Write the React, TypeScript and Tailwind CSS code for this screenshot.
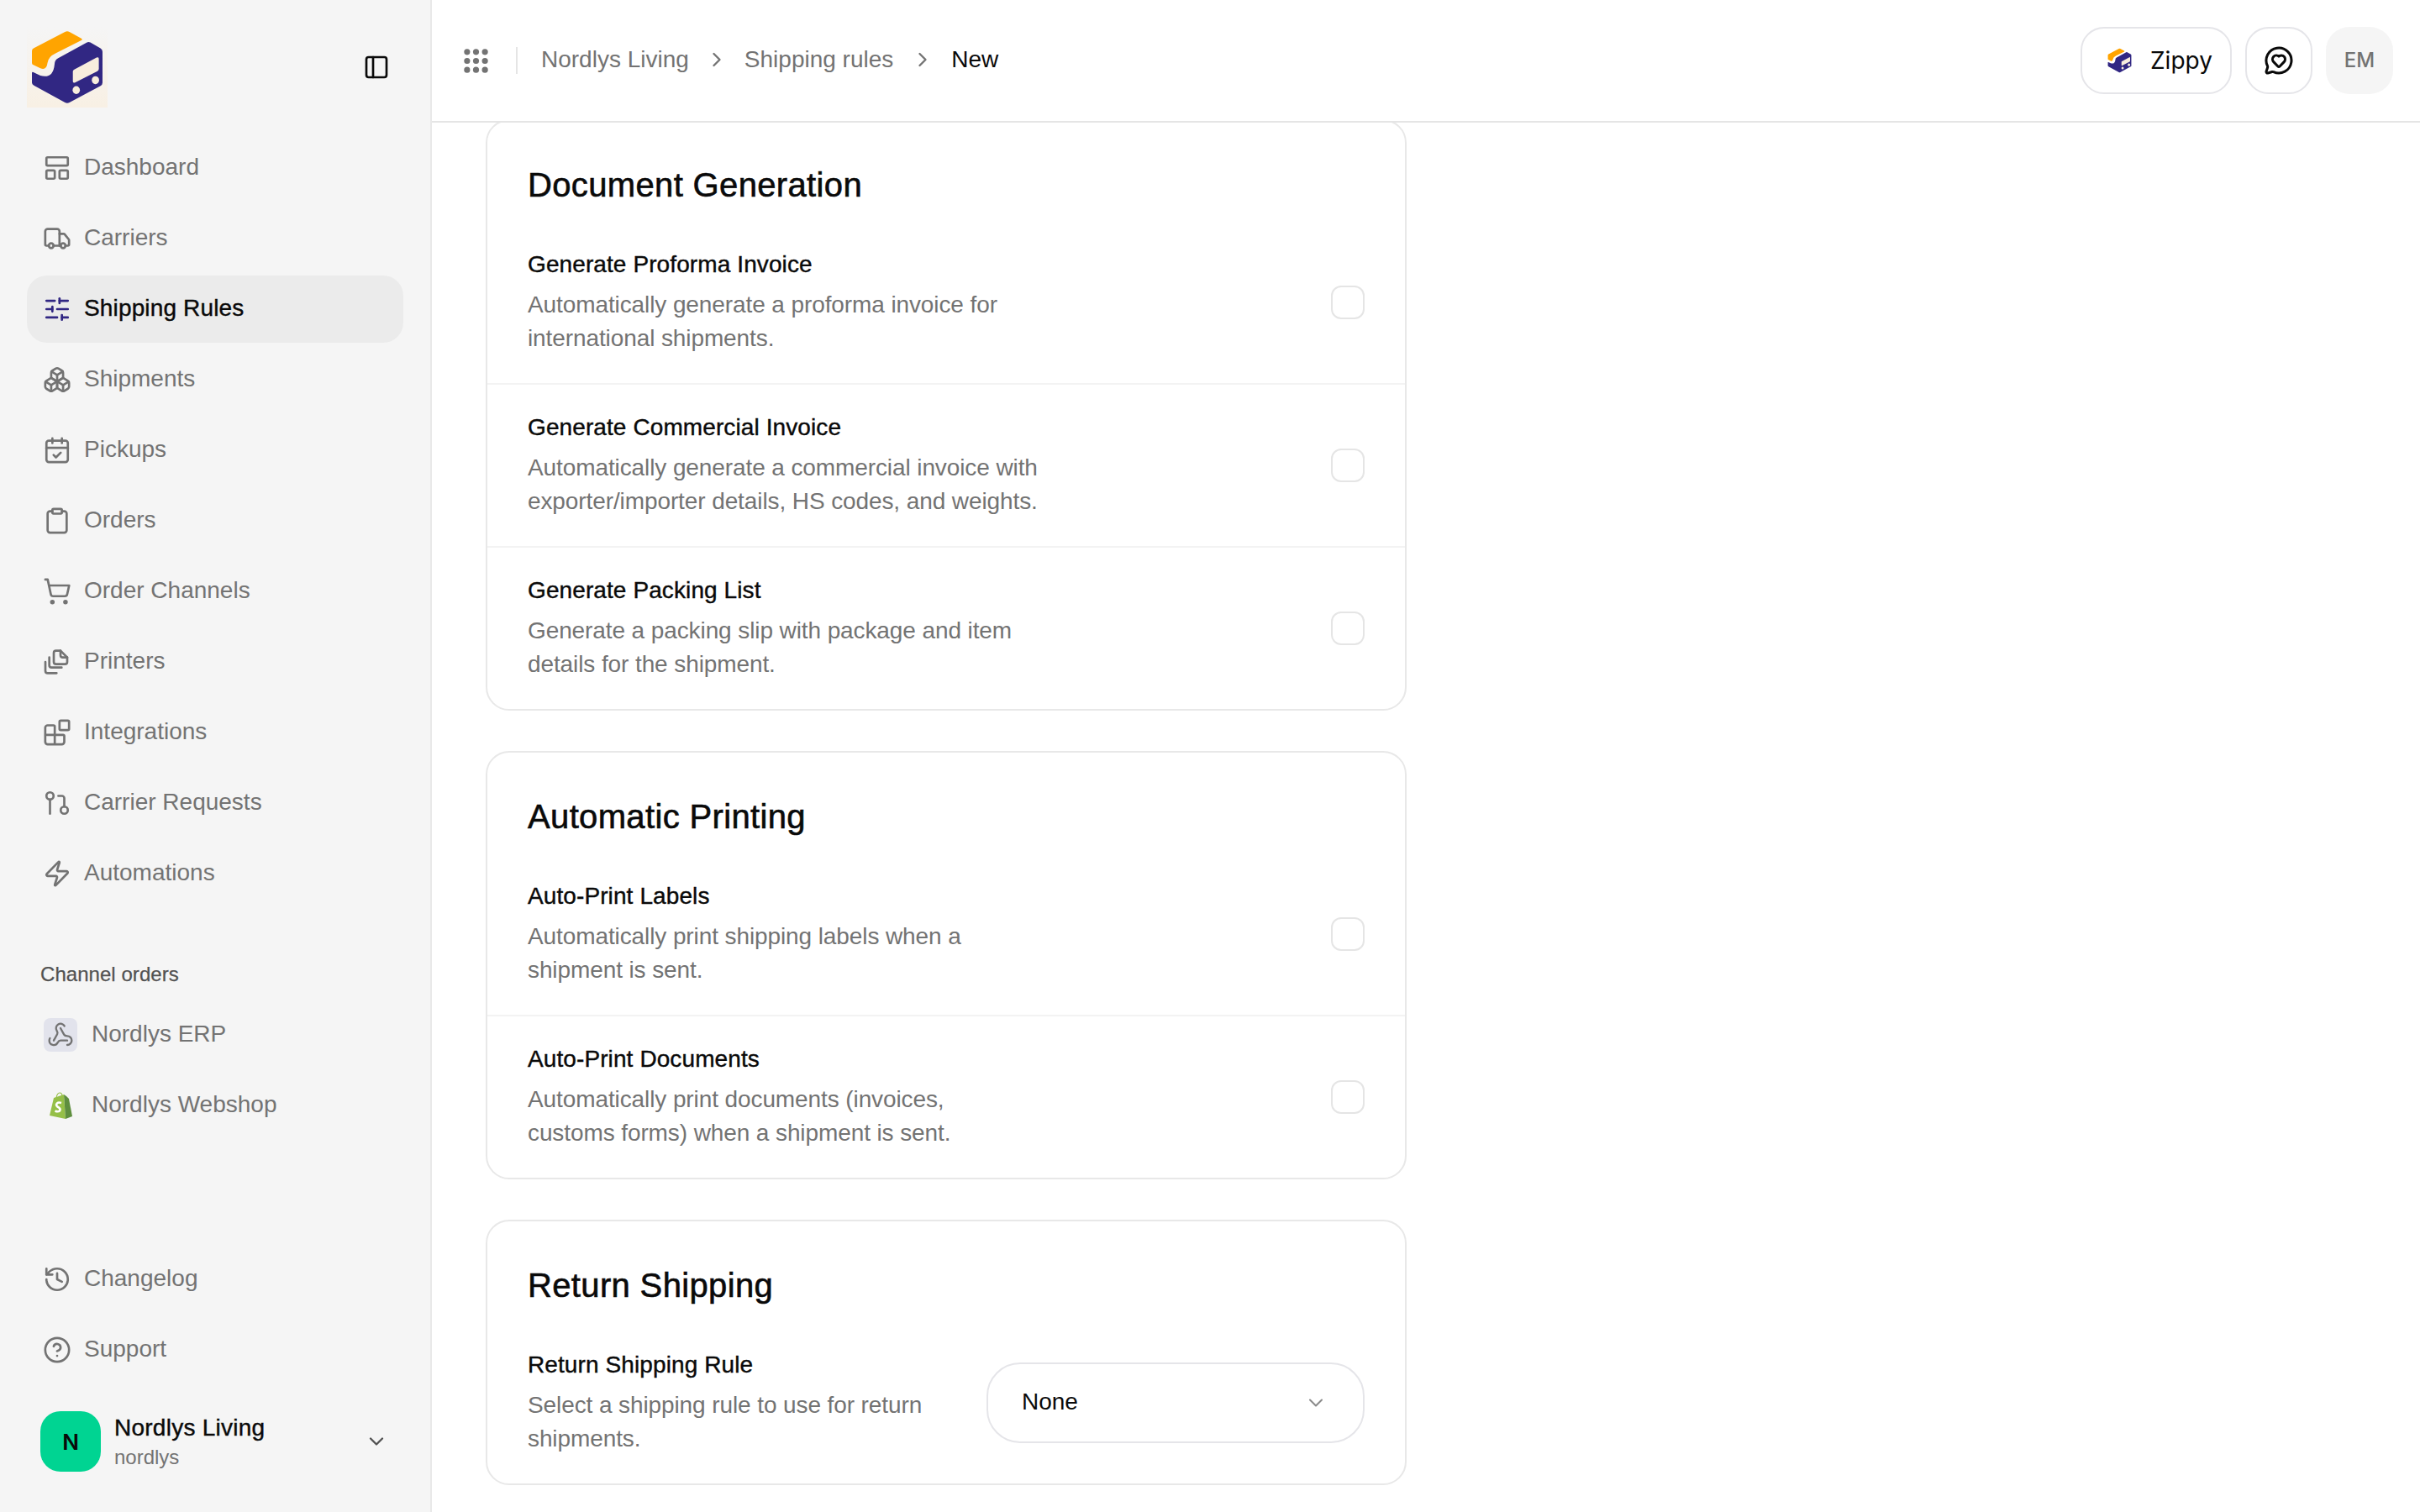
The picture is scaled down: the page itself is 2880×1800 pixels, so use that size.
import {
  Blocks,
  Boxes,
  CalendarCheck,
  ChevronDown,
  ChevronRight,
  CircleHelp,
  Clipboard,
  GitPullRequest,
  History,
  LayoutPanelTop,
  MessageCircleHeart,
  PanelLeft,
  ShoppingCart,
  SlidersHorizontal,
  Truck,
  Webhook,
  Zap,
} from 'lucide-react'
import type { ReactNode } from 'react'

function Logo({ className }: { className?: string }) {
  return (
    <svg viewBox="50 46 260 268" className={className}>
      <path
        d="M62 112 L172 55 Q180 51 188 55 L230 78 Q236 82 230 85 L140 130 Q112 143 110 165 Q107 192 85 184 L60 172 Q55 170 55 165 L55 122 Q55 115 62 112 Z"
        fill="#ffa400"
      />
      <path
        d="M250 92 Q255 89 262 92 L298 113 Q305 117 305 125 L305 235 Q305 242 298 246 L188 305 Q180 309 172 305 L62 245 Q55 241 55 235 L55 200 Q55 196 60 198 L85 210 Q130 222 135 170 Q135 155 148 148 Z"
        fill="#312783"
      />
      <path
        d="M205 188 L284 146 Q292 142 292 150 L292 186 Q292 191 287 194 L208 234 Q200 238 200 230 L200 195 Q200 190 205 188 Z"
        fill="#f8eddd"
      />
      <ellipse cx="212" cy="261" rx="13" ry="14" fill="#f8eddd" />
      <ellipse cx="280" cy="226" rx="13" ry="14" fill="#f8eddd" />
    </svg>
  )
}

function PrinterDocs({ className }: { className?: string }) {
  return (
    <svg
      viewBox="0 0 24 24"
      fill="none"
      stroke="currentColor"
      strokeWidth="2"
      strokeLinecap="round"
      strokeLinejoin="round"
      className={className}
    >
      <path d="M15 2h-4a2 2 0 0 0-2 2v8a2 2 0 0 0 2 2h8a2 2 0 0 0 2-2V8z" />
      <path d="M15 2v4a2 2 0 0 0 2 2h4" />
      <path d="M5 8v7a2 2 0 0 0 2 2h9" />
      <path d="M1.5 12v8a2 2 0 0 0 2 2h8" />
    </svg>
  )
}

function ShopifyBag({ className }: { className?: string }) {
  return (
    <svg viewBox="0 0 28 32" className={className}>
      <path d="M1 28 L6 7 L18 3 L20 32 Z" fill="#95bf47" />
      <path d="M18 3 L21 5 L24 8 L28 29 L20 32 Z" fill="#5e8e3e" />
      <path d="M9 7 Q10 1 13 1 Q16 1 16 5" fill="none" stroke="#95bf47" strokeWidth="1.2" />
      <path
        d="M15 13 Q10 11.5 9 15 Q9 17 12 18.5 Q14.5 20 13 22.5 Q11 24 7.5 22.5"
        fill="none"
        stroke="#ffffff"
        strokeWidth="2.6"
      />
    </svg>
  )
}

const navIcon = 'h-[34px] w-[34px]'

const navItems = [
  { label: 'Dashboard', icon: <LayoutPanelTop className={navIcon} strokeWidth={1.9} /> },
  { label: 'Carriers', icon: <Truck className={navIcon} strokeWidth={1.9} /> },
  { label: 'Shipping Rules', icon: <SlidersHorizontal className="h-[34px] w-[34px] text-[#312783]" strokeWidth={1.9} />, active: true },
  { label: 'Shipments', icon: <Boxes className={navIcon} strokeWidth={1.9} /> },
  { label: 'Pickups', icon: <CalendarCheck className={navIcon} strokeWidth={1.9} /> },
  { label: 'Orders', icon: <Clipboard className={navIcon} strokeWidth={1.9} /> },
  { label: 'Order Channels', icon: <ShoppingCart className={navIcon} strokeWidth={1.9} /> },
  { label: 'Printers', icon: <PrinterDocs className="h-8 w-8 mx-px" /> },
  { label: 'Integrations', icon: <Blocks className={navIcon} strokeWidth={1.9} /> },
  { label: 'Carrier Requests', icon: <GitPullRequest className={navIcon} strokeWidth={1.9} /> },
  { label: 'Automations', icon: <Zap className={navIcon} strokeWidth={1.9} /> },
]

function NavItem({
  icon,
  label,
  active = false,
  compact = false,
}: {
  icon: ReactNode
  label: string
  active?: boolean
  compact?: boolean
}) {
  return (
    <div
      className={`flex h-20 items-center rounded-3xl text-[28px] ${
        compact ? 'gap-[17px] pl-5' : 'gap-[15px] pl-[19px]'
      } ${
        active
          ? 'bg-[#ebebeb] tracking-[0.15px] text-[#0a0a0a] [-webkit-text-stroke:0.4px_#0a0a0a]'
          : 'text-[#737373]'
      }`}
    >
      {icon}
      <span className="-translate-y-px">{label}</span>
    </div>
  )
}

function Sidebar() {
  return (
    <aside className="flex h-full w-[514px] shrink-0 flex-col border-r-2 border-[#e9e9e9] bg-[#f5f5f5] px-8 pt-8 pb-12">
      <div className="mb-8 flex h-24 items-center justify-between pr-4">
        <div className="flex h-24 w-24 items-center justify-center bg-gradient-to-b from-[#f5f5f5] to-[#f8f0e4]">
          <Logo className="h-[90px] w-[88px]" />
        </div>
        <PanelLeft className="h-8 w-8 text-[#0a0a0a]" strokeWidth={2} />
      </div>

      <nav className="flex flex-col gap-1">
        {navItems.map((item) => (
          <NavItem key={item.label} icon={item.icon} label={item.label} active={item.active} />
        ))}
      </nav>

      <div className="mt-16 mb-4 pl-4 text-2xl/8 tracking-[0.05px] text-[#525252] [-webkit-text-stroke:0.25px_#525252]">
        Channel orders
      </div>
      <div className="flex flex-col gap-1">
        <NavItem
          compact
          label="Nordlys ERP"
          icon={
            <span className="flex h-10 w-10 items-center justify-center rounded-lg bg-[#e2e3ec]">
              <Webhook className="h-8 w-8" strokeWidth={1.75} />
            </span>
          }
        />
        <NavItem
          compact
          label="Nordlys Webshop"
          icon={
            <span className="flex h-10 w-10 items-center justify-center">
              <ShopifyBag className="h-8 w-7" />
            </span>
          }
        />
      </div>

      <div className="mt-auto flex flex-col gap-1">
        <NavItem label="Changelog" icon={<History className={navIcon} strokeWidth={1.9} />} />
        <NavItem label="Support" icon={<CircleHelp className={navIcon} strokeWidth={1.9} />} />
      </div>

      <div className="mt-[33px] flex items-center pr-[18px] pl-4">
        <div className="flex h-[72px] w-[72px] items-center justify-center rounded-3xl bg-[#00d492] font-['Inter',sans-serif] text-[26px] font-semibold text-[#0a0a0a]">
          N
        </div>
        <div className="ml-4 flex flex-col">
          <span className="text-[28px]/[38px] tracking-[0.25px] text-[#0a0a0a] [-webkit-text-stroke:0.4px_#0a0a0a]">
            Nordlys Living
          </span>
          <span className="text-2xl/8 text-[#737373]">nordlys</span>
        </div>
        <ChevronDown className="ml-auto h-7 w-7 text-[#525252]" strokeWidth={2} />
      </div>
    </aside>
  )
}

function Header() {
  return (
    <header className="relative z-10 flex h-[146px] shrink-0 items-center border-b-2 border-[#e5e5e5] bg-white pr-8 pl-[38px]">
      <svg viewBox="0 0 30 30" className="h-[29px] w-[29px] text-[#737373]" fill="currentColor">
        {[4, 15, 26].map((cy) =>
          [4, 15, 26].map((cx) => <circle key={`${cx}-${cy}`} cx={cx} cy={cy} r="3.7" />),
        )}
      </svg>
      <div className="mr-7 ml-[33px] h-8 w-0.5 bg-[#e5e5e5]" />
      <div className="flex items-center gap-[19px] pb-0.5 text-[28px] text-[#737373]">
        <span>Nordlys Living</span>
        <ChevronRight className="h-7 w-7" strokeWidth={2} />
        <span>Shipping rules</span>
        <ChevronRight className="ml-0.5 h-7 w-7" strokeWidth={2} />
        <span className="ml-px text-[#0a0a0a]">New</span>
      </div>
      <div className="ml-auto flex items-center gap-4 font-['Inter',sans-serif]">
        <div className="flex h-20 w-[180px] items-center gap-[22px] rounded-[28px] border-2 border-[#e5e5e9] pl-[30px] text-[28px] text-[#0a0a0a]">
          <Logo className="h-[30px] w-[29px]" />
          <span>Zippy</span>
        </div>
        <div className="flex h-20 w-20 items-center justify-center rounded-[28px] border-2 border-[#e5e5e9]">
          <MessageCircleHeart className="h-9 w-9 text-[#0a0a0a]" strokeWidth={2} />
        </div>
        <div className="flex h-20 w-20 items-center justify-center rounded-[28px] bg-[#f5f5f5] text-2xl font-medium text-[#737373]">
          EM
        </div>
      </div>
    </header>
  )
}

function Row({ title, lines, first = false, children }: { title: string; lines: string[]; first?: boolean; children: ReactNode }) {
  return (
    <div className={`flex items-center justify-between px-12 py-8 ${first ? '' : 'border-t-2 border-[#f3f3f3]'}`}>
      <div className="-translate-y-px">
        <div className="mb-2 text-[28px]/10 tracking-[0.1px] text-[#0a0a0a] [-webkit-text-stroke:0.4px_#0a0a0a]">{title}</div>
        <p className="text-[28px]/10 tracking-[-0.1px] text-[#737373]">
          {lines[0]}
          <br />
          {lines[1]}
        </p>
      </div>
      {children}
    </div>
  )
}

function Check() {
  return <div className="h-10 w-10 rounded-xl border-2 border-[#e5e5e5] bg-white" />
}

function Card({ title, children }: { title: string; children: ReactNode }) {
  return (
    <section className="w-[1096px] rounded-[28px] border-2 border-[#e8e8e8] bg-white">
      <h2 className="mt-12 mb-4 px-12 text-[40px]/14 tracking-[0.35px] text-[#0a0a0a] [-webkit-text-stroke:0.6px_#0a0a0a]">
        {title}
      </h2>
      {children}
    </section>
  )
}

export default function App() {
  return (
    <div className="flex h-[1800px] w-[2880px] overflow-hidden bg-white font-['Liberation_Sans',sans-serif]">
      <Sidebar />
      <main className="flex h-full flex-1 flex-col">
        <Header />
        <div className="-mt-1 flex flex-col gap-12 pl-16">
          <Card title="Document Generation">
            <Row first title="Generate Proforma Invoice" lines={['Automatically generate a proforma invoice for', 'international shipments.']}>
              <Check />
            </Row>
            <Row title="Generate Commercial Invoice" lines={['Automatically generate a commercial invoice with', 'exporter/importer details, HS codes, and weights.']}>
              <Check />
            </Row>
            <Row title="Generate Packing List" lines={['Generate a packing slip with package and item', 'details for the shipment.']}>
              <Check />
            </Row>
          </Card>
          <Card title="Automatic Printing">
            <Row first title="Auto-Print Labels" lines={['Automatically print shipping labels when a', 'shipment is sent.']}>
              <Check />
            </Row>
            <Row title="Auto-Print Documents" lines={['Automatically print documents (invoices,', 'customs forms) when a shipment is sent.']}>
              <Check />
            </Row>
          </Card>
          <Card title="Return Shipping">
            <Row first title="Return Shipping Rule" lines={['Select a shipping rule to use for return', 'shipments.']}>
              <div className="flex h-24 w-[450px] items-center justify-between rounded-[40px] border-2 border-[#e5e5e9] pr-[42px] pl-10 text-[28px] text-[#0a0a0a]">
                <span className="-translate-y-px">None</span>
                <ChevronDown className="h-7 w-7 text-[#8a8a8a]" strokeWidth={1.75} />
              </div>
            </Row>
          </Card>
        </div>
      </main>
    </div>
  )
}
